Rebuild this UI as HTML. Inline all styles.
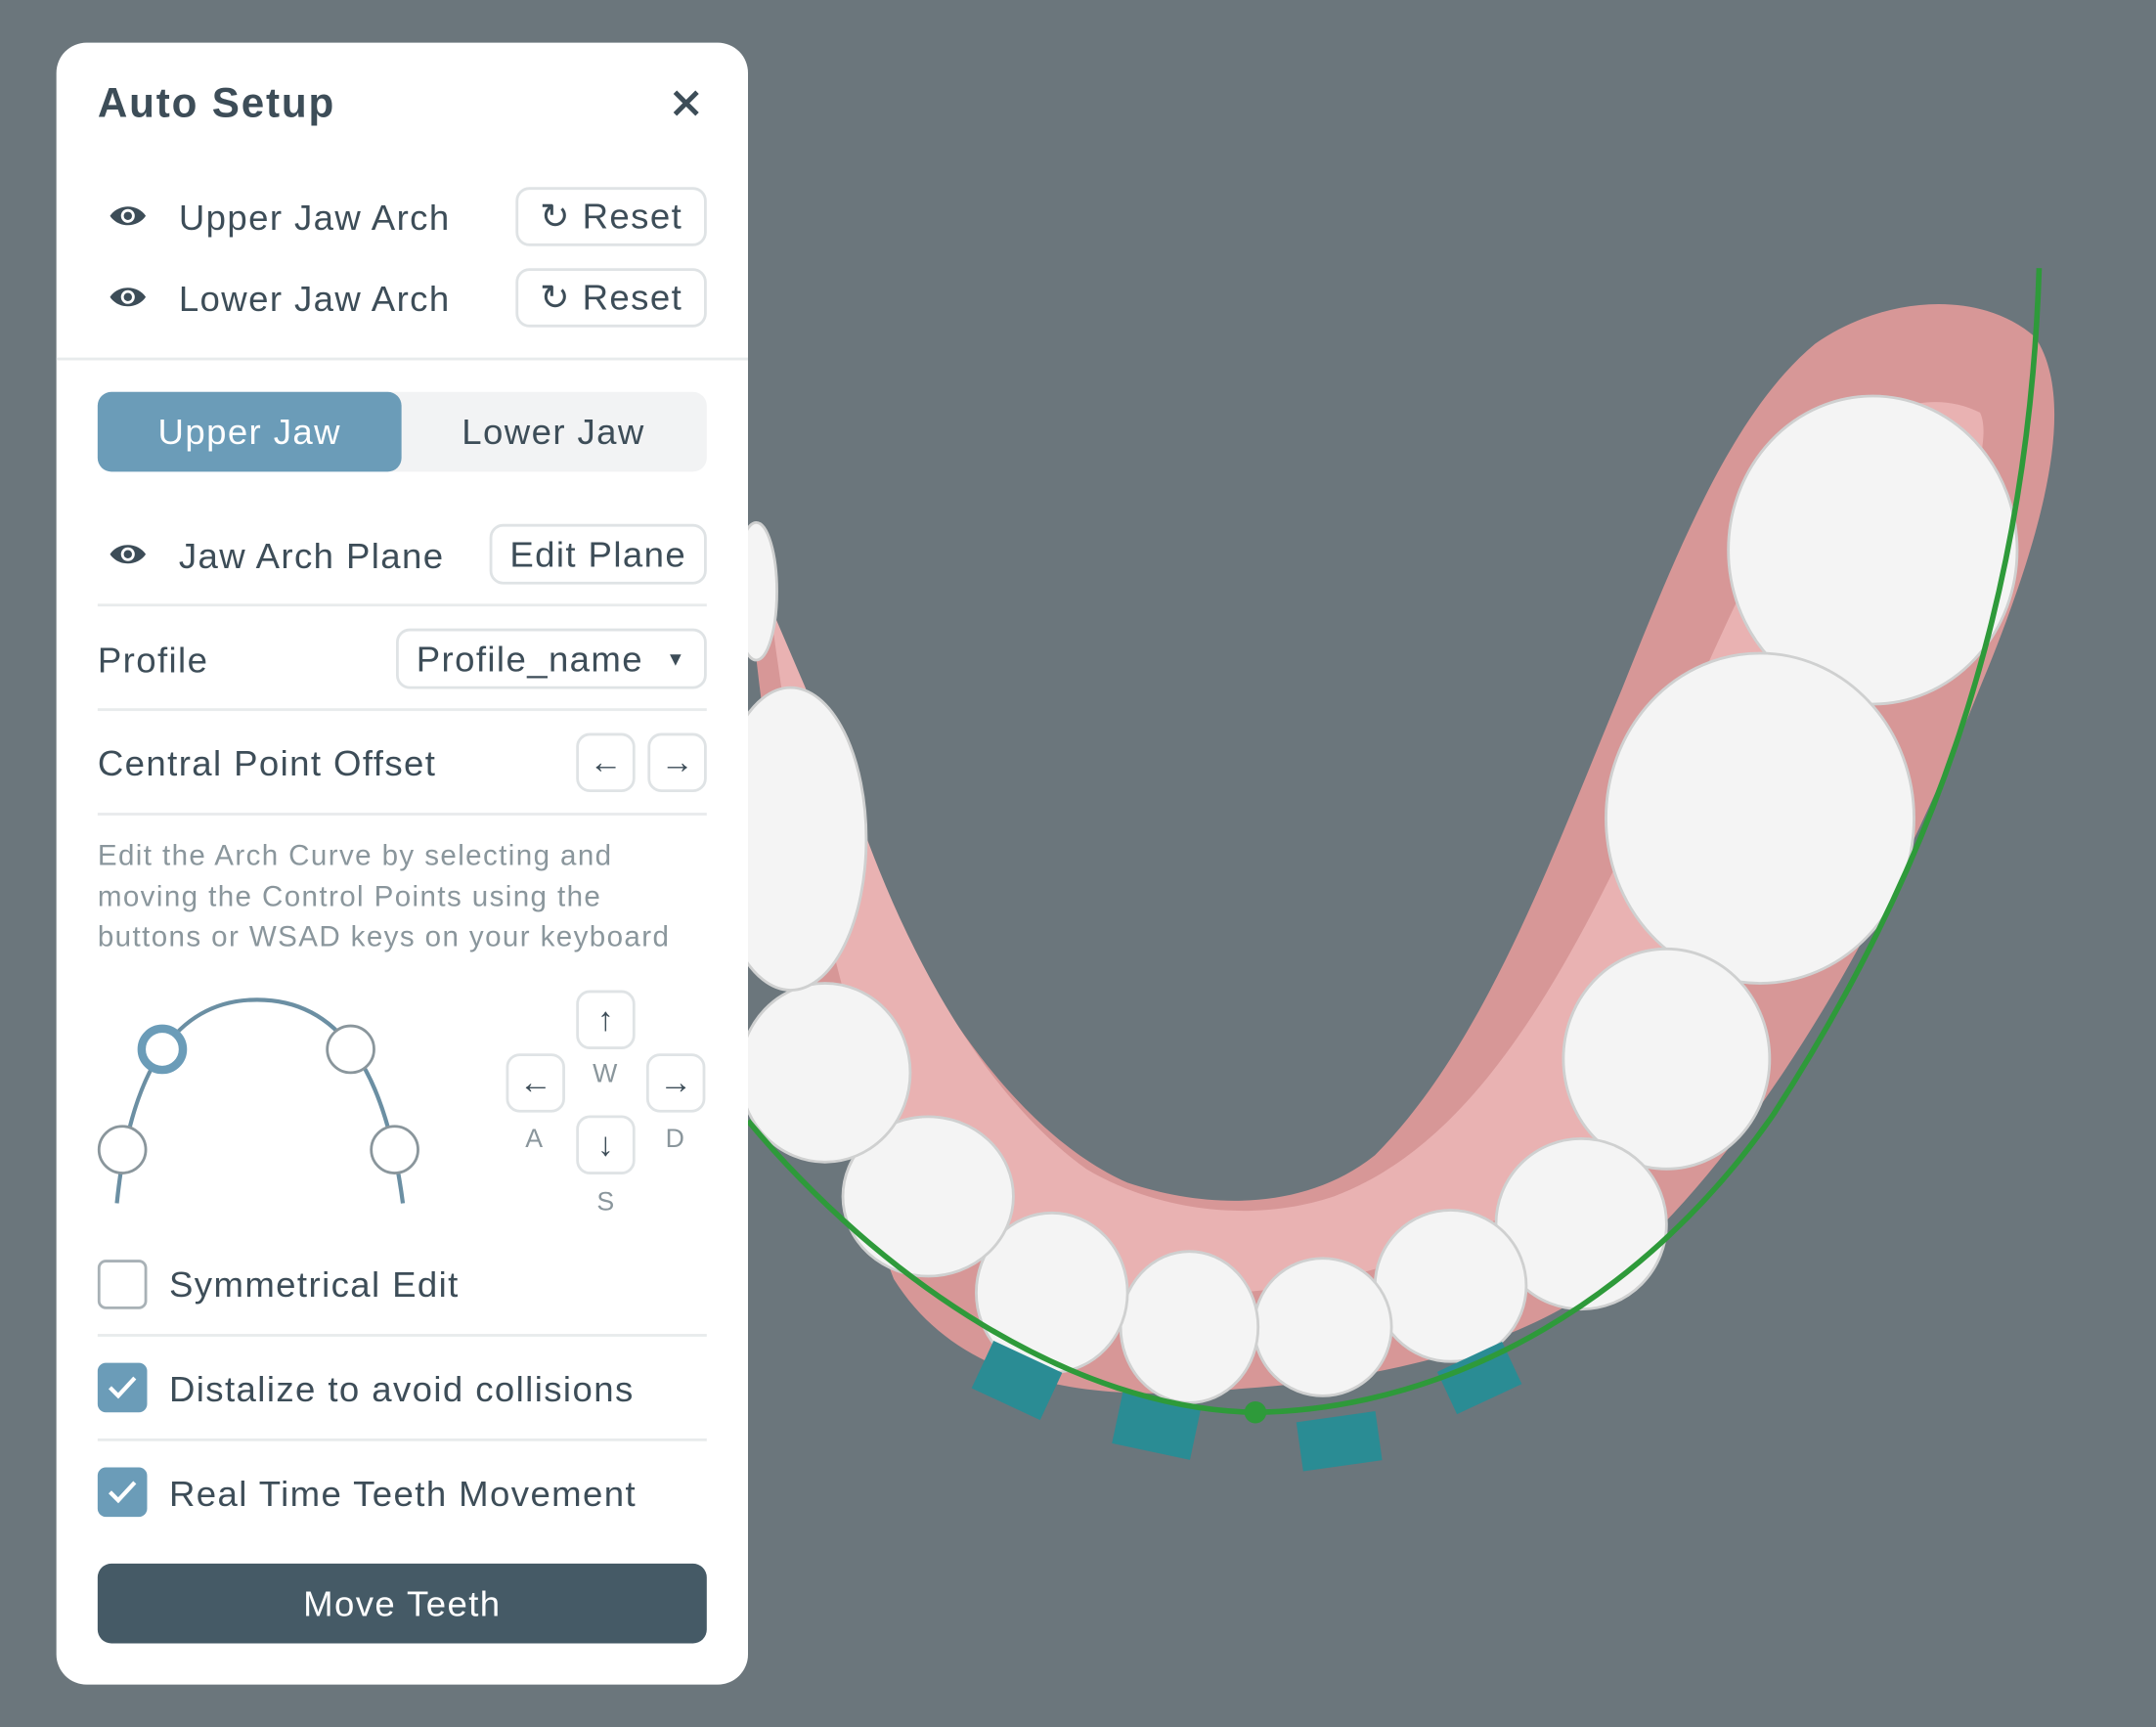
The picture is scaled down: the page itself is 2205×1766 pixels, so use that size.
<!DOCTYPE html>
<html><head><meta charset="utf-8"><style>
html,body{margin:0;padding:0;background:#6b767c;width:2205px;height:1766px;overflow:hidden}
#s{position:absolute;left:0;top:0;width:1568px;height:1256px;transform:scale(1.40625);transform-origin:0 0;font-family:"Liberation Sans",sans-serif;color:#3d4d58}
.a{position:absolute}
.panel{left:41px;top:31px;width:503px;height:1194px;background:#fff;border-radius:22px}
.t{font-size:26px;letter-spacing:1px;white-space:nowrap}
.btn{border:2px solid #dfe3e5;border-radius:10px;background:#fff;box-sizing:border-box;display:flex;align-items:center;justify-content:center;font-size:26px;letter-spacing:1px}
.ar{font-weight:bold;font-size:24px;letter-spacing:0}
.hr{height:2px;background:#e8ebec}
.cb{width:36px;height:36px;border-radius:6px;box-sizing:border-box}
</style></head><body><div id="s">
<svg class="a" style="left:0;top:0" width="1568" height="1256" viewBox="0 0 1568 1256">
<path d="M544 420 C560 600 600 800 650 930 C700 1010 800 1020 900 1010 C1050 1000 1150 960 1200 900 C1300 800 1380 650 1440 500 C1490 380 1510 290 1480 245 C1440 210 1370 215 1320 250 C1260 300 1220 400 1180 500 C1130 620 1080 760 1000 840 C950 880 880 880 820 860 C730 820 660 700 620 600 C590 520 570 470 544 420Z" fill="#d79797"/>
<path d="M560 440 C580 600 620 780 670 880 C720 940 800 950 900 940 C1030 930 1120 880 1170 820 C1250 720 1330 580 1390 460 C1430 380 1450 320 1440 300 C1400 280 1350 300 1310 350 C1260 430 1220 540 1170 640 C1110 760 1050 840 970 870 C910 890 840 880 790 850 C720 800 660 700 620 580Z" fill="#e9b2b2"/>
<g fill="#f4f4f4" stroke="#cfd0d0" stroke-width="2">
<ellipse cx="1362" cy="400" rx="105" ry="112"/>
<ellipse cx="1280" cy="595" rx="112" ry="120"/>
<ellipse cx="1212" cy="770" rx="75" ry="80"/>
<ellipse cx="1150" cy="890" rx="62" ry="62"/>
<ellipse cx="1055" cy="935" rx="55" ry="55"/>
<ellipse cx="962" cy="965" rx="50" ry="50"/>
<ellipse cx="865" cy="965" rx="50" ry="55"/>
<ellipse cx="765" cy="940" rx="55" ry="58"/>
<ellipse cx="675" cy="870" rx="62" ry="58"/>
<ellipse cx="600" cy="780" rx="62" ry="65"/>
<ellipse cx="575" cy="610" rx="55" ry="110"/>
<ellipse cx="550" cy="430" rx="15" ry="50"/>
</g>
<g fill="#2a8c94">
<rect x="712" y="985" width="55" height="38" transform="rotate(25 740 1004)"/>
<rect x="812" y="1018" width="58" height="38" transform="rotate(12 841 1037)"/>
<rect x="945" y="1030" width="58" height="36" transform="rotate(-8 974 1048)"/>
<rect x="1050" y="985" width="52" height="34" transform="rotate(-25 1076 1002)"/>
</g>
<path d="M544 815 C640 930 780 1025 913 1027 C1060 1025 1200 940 1290 810 C1400 640 1475 450 1483 195" fill="none" stroke="#2e9a3a" stroke-width="4"/>
<circle cx="913" cy="1027" r="8" fill="#2e9a3a"/>
</svg>
<div class="a panel"></div>
<div class="a" style="left:71px;top:59px;font-size:30px;font-weight:bold;letter-spacing:1.3px">Auto Setup</div>
<svg class="a" style="left:488px;top:64px" width="22" height="22"><path d="M3 3L19 19M19 3L3 19" stroke="#3d4d58" stroke-width="3.5"/></svg>
<svg class="a" style="left:78px;top:146px" width="30" height="22" viewBox="0 0 30 22"><path d="M2 11C8 2 22 2 28 11C22 20 8 20 2 11Z" fill="#3d4d58"/><circle cx="15" cy="11" r="5" fill="#fff"/><circle cx="15" cy="11" r="3" fill="#3d4d58"/></svg>
<div class="a t" style="left:130px;top:143px">Upper Jaw Arch</div>
<div class="a btn" style="left:375px;top:136px;width:139px;height:43px">↻&nbsp;Reset</div>
<svg class="a" style="left:78px;top:205px" width="30" height="22" viewBox="0 0 30 22"><path d="M2 11C8 2 22 2 28 11C22 20 8 20 2 11Z" fill="#3d4d58"/><circle cx="15" cy="11" r="5" fill="#fff"/><circle cx="15" cy="11" r="3" fill="#3d4d58"/></svg>
<div class="a t" style="left:130px;top:202px">Lower Jaw Arch</div>
<div class="a btn" style="left:375px;top:195px;width:139px;height:43px">↻&nbsp;Reset</div>
<div class="a hr" style="left:41px;top:260px;width:503px"></div>
<div class="a" style="left:71px;top:285px;width:443px;height:58px;background:#f2f3f4;border-radius:10px"></div>
<div class="a t" style="left:71px;top:285px;width:221px;height:58px;background:#6b9cb8;border-radius:10px;color:#fff;display:flex;align-items:center;justify-content:center">Upper Jaw</div>
<div class="a t" style="left:292px;top:285px;width:221px;height:58px;display:flex;align-items:center;justify-content:center">Lower Jaw</div>
<svg class="a" style="left:78px;top:392px" width="30" height="22" viewBox="0 0 30 22"><path d="M2 11C8 2 22 2 28 11C22 20 8 20 2 11Z" fill="#3d4d58"/><circle cx="15" cy="11" r="5" fill="#fff"/><circle cx="15" cy="11" r="3" fill="#3d4d58"/></svg>
<div class="a t" style="left:130px;top:389px">Jaw Arch Plane</div>
<div class="a btn" style="left:356px;top:381px;width:158px;height:44px">Edit Plane</div>
<div class="a hr" style="left:71px;top:439px;width:443px"></div>
<div class="a t" style="left:71px;top:465px">Profile</div>
<div class="a btn" style="left:288px;top:457px;width:226px;height:44px">Profile_name&nbsp;&nbsp;<span style="font-size:14px">▼</span></div>
<div class="a hr" style="left:71px;top:515px;width:443px"></div>
<div class="a t" style="left:71px;top:540px">Central Point Offset</div>
<div class="a btn" style="left:419px;top:533px;width:43px;height:43px"><span class="ar">←</span></div>
<div class="a btn" style="left:471px;top:533px;width:43px;height:43px"><span class="ar">→</span></div>
<div class="a hr" style="left:71px;top:591px;width:443px"></div>
<div class="a" style="left:71px;top:608px;font-size:21px;letter-spacing:1px;line-height:29.5px;color:#8a969c;white-space:nowrap">Edit the Arch Curve by selecting and<br>moving the Control Points using the<br>buttons or WSAD keys on your keyboard</div>
<svg class="a" style="left:60px;top:715px" width="260" height="170">
<path d="M25 160 C35 60 70 12 127 12 C185 12 220 60 233 160" fill="none" stroke="#6b8fa3" stroke-width="3"/>
<g fill="#fff" stroke="#8a969c" stroke-width="2"><circle cx="195" cy="48" r="17"/><circle cx="29" cy="121" r="17"/><circle cx="227" cy="121" r="17"/></g>
<circle cx="58" cy="48" r="15" fill="#fff" stroke="#6b9cb8" stroke-width="6"/>
</svg>
<div class="a btn" style="left:419px;top:720px;width:43px;height:43px"><span class="ar">↑</span></div>
<div class="a btn" style="left:368px;top:766px;width:43px;height:43px"><span class="ar">←</span></div>
<div class="a btn" style="left:470px;top:766px;width:43px;height:43px"><span class="ar">→</span></div>
<div class="a btn" style="left:419px;top:811px;width:43px;height:43px"><span class="ar">↓</span></div>
<div class="a" style="left:431px;top:771px;font-size:19px;color:#8a969c">W</div>
<div class="a" style="left:382px;top:818px;font-size:19px;color:#8a969c">A</div>
<div class="a" style="left:484px;top:818px;font-size:19px;color:#8a969c">D</div>
<div class="a" style="left:434px;top:864px;font-size:19px;color:#8a969c">S</div>
<div class="a cb" style="left:71px;top:916px;border:2px solid #a8b1b6"></div>
<div class="a t" style="left:123px;top:919px">Symmetrical Edit</div>
<div class="a hr" style="left:71px;top:970px;width:443px"></div>
<div class="a cb" style="left:71px;top:991px;background:#6b9cb8"><svg width="36" height="36"><path d="M9 18L15 24L27 11" fill="none" stroke="#fff" stroke-width="3"/></svg></div>
<div class="a t" style="left:123px;top:995px">Distalize to avoid collisions</div>
<div class="a hr" style="left:71px;top:1046px;width:443px"></div>
<div class="a cb" style="left:71px;top:1067px;background:#6b9cb8"><svg width="36" height="36"><path d="M9 18L15 24L27 11" fill="none" stroke="#fff" stroke-width="3"/></svg></div>
<div class="a t" style="left:123px;top:1071px">Real Time Teeth Movement</div>
<div class="a t" style="left:71px;top:1137px;width:443px;height:58px;background:#455a66;border-radius:10px;color:#fff;display:flex;align-items:center;justify-content:center">Move Teeth</div>
</div></body></html>
